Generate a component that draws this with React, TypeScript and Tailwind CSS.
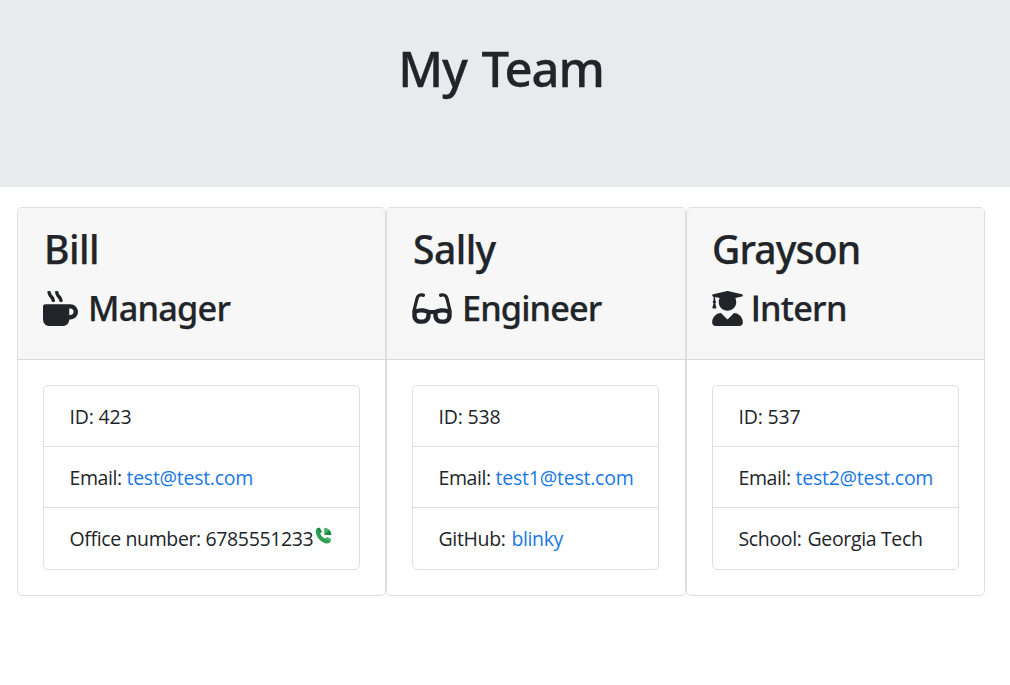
import type { ReactNode } from "react";
import { FaGlasses, FaMugHot, FaUserGraduate } from "react-icons/fa";

function PhoneIcon() {
  return (
    <svg viewBox="0 0 17 17" className="relative -top-[3px] ml-[2px] inline-block h-[17px] w-[17px]">
      <path d="M2.2 1.3 4.600.7l2.200 4-1.700 1.600c.8 2.300 2.800 4.400 5.200 5.400l1.800-1.700 3.800 2-.5 2.500c-.5 1.500-2.200 2.200-4 1.900C6.300 15.600 1.400 10.500.8 5.200.6 3.300 1 2 2.200 1.300Z" fill="#2f9e55" />
      <path d="m10.300 11.700 1.800-1.700 3.800 2-.5 2.500Z" fill="#4cba70" />
      <path d="M2.200 1.300 4.600.7l2.200 4-1.700 1.600Z" fill="#1f8748" />
      <path d="M9.200.7v7.100l7.100.1C16.200 4 13.200.8 9.200.7Z" fill="#44b36a" />
      <path d="m9.200 7.800 7.100.1c0-2-.8-3.800-2-5Z" fill="#1f8748" />
    </svg>
  );
}

type CardProps = {
  name: ReactNode;
  icon: ReactNode;
  role: ReactNode;
  width: string;
  listWidth: string;
  rows: ReactNode[];
};

function Card({ name, icon, role, width, listWidth, rows }: CardProps) {
  return (
    <article className={`${width} h-[389px] shrink-0 overflow-hidden rounded-[5px] border border-[#dfdfdf] bg-white`}>
      <header className="h-[152px] border-b border-[#d9d9d9] bg-[#f7f7f7] px-[25px] pt-[17px] [-webkit-text-stroke:0.25px_#212529]">
        <h2 className="h-[48px] pl-[1px] text-[39px] leading-[48px] font-medium">{name}</h2>
        <h3 className="mt-[14px] flex h-[42px] items-center text-[34.300px] leading-[42px] font-medium">
          {icon}
          {role}
        </h3>
      </header>
      <div className="p-[25px]">
        <ul className={`${listWidth} divide-y divide-[#dfdfdf] rounded-[5px] border border-[#dfdfdf]`}>
          {rows.map((row, i) => (
            <li key={i} className="flex h-[61px] items-center pt-[2px] pl-[25.500px] font-['Open_Sans',sans-serif] text-[19.500px] whitespace-nowrap last:pt-0">
              {row}
            </li>
          ))}
        </ul>
      </div>
    </article>
  );
}

export default function App() {
  return (
    <div className="h-[685px] overflow-hidden bg-white font-['Noto_Sans',sans-serif] text-[#212529]">
      <div className="h-[187px] bg-[#e8ebee] pt-[38px]">
        <h1 className="pr-[8px] text-center text-[49px] leading-[60px] font-medium tracking-[-1.100px] [word-spacing:3px] [-webkit-text-stroke:0.3px_#212529]">My Team</h1>
      </div>
      <main className="flex pt-[20px] pl-[17px]">
        <Card
          width="w-[369px]"
          listWidth="w-[317px]"
          name={<span className="tracking-[-0.500px]">Bill</span>}
          icon={<FaMugHot className="h-[35px] w-[35px]" />}
          role={<span className="ml-[10px] tracking-[-0.800px]">Manager</span>}
          rows={[
            <span className="tracking-[-0.200px]">ID: 423</span>,
            <>
              <span className="w-[57px] tracking-[-0.400px]">Email:</span>
              <a className="tracking-[-0.270px] text-[#1a78e5]">test@test.com</a>
            </>,
            <>
              <span className="tracking-[-0.370px]">Office number: 6785551233</span>
              <PhoneIcon />
            </>,
          ]}
        />
        <Card
          width="w-[300px]"
          listWidth="w-[247px]"
          name={<span className="tracking-[-0.550px]">Sally</span>}
          icon={<FaGlasses className="h-[35px] w-[40px]" />}
          role={<span className="ml-[10px] tracking-[-0.900px]">Engineer</span>}
          rows={[
            <span className="tracking-[-0.200px]">ID: 538</span>,
            <>
              <span className="w-[57px] tracking-[-0.400px]">Email:</span>
              <a className="tracking-[-0.220px] text-[#1a78e5]">test1@test.com</a>
            </>,
            <>
              <span className="w-[73px] tracking-[-0.350px]">GitHub:</span>
              <a className="tracking-[-0.400px] text-[#1a78e5]">blinky</a>
            </>,
          ]}
        />
        <Card
          width="w-[299px]"
          listWidth="w-[247px]"
          name={<span className="-ml-[1px] tracking-[-0.850px]">Grayson</span>}
          icon={<FaUserGraduate className="h-[35px] w-[31px]" />}
          role={
            <span className="ml-[8px] tracking-[-0.700px]">
              <span className="font-['Open_Sans',sans-serif] font-normal [-webkit-text-stroke:1.200px_#212529]">I</span>ntern
            </span>
          }
          rows={[
            <span className="tracking-[-0.200px]">ID: 537</span>,
            <>
              <span className="w-[57px] tracking-[-0.400px]">Email:</span>
              <a className="tracking-[-0.250px] text-[#1a78e5]">test2@test.com</a>
            </>,
            <>
              <span className="w-[69px] tracking-[-0.350px]">School:</span>
              <span className="tracking-[-0.350px]">Georgia Tech</span>
            </>,
          ]}
        />
      </main>
    </div>
  );
}
